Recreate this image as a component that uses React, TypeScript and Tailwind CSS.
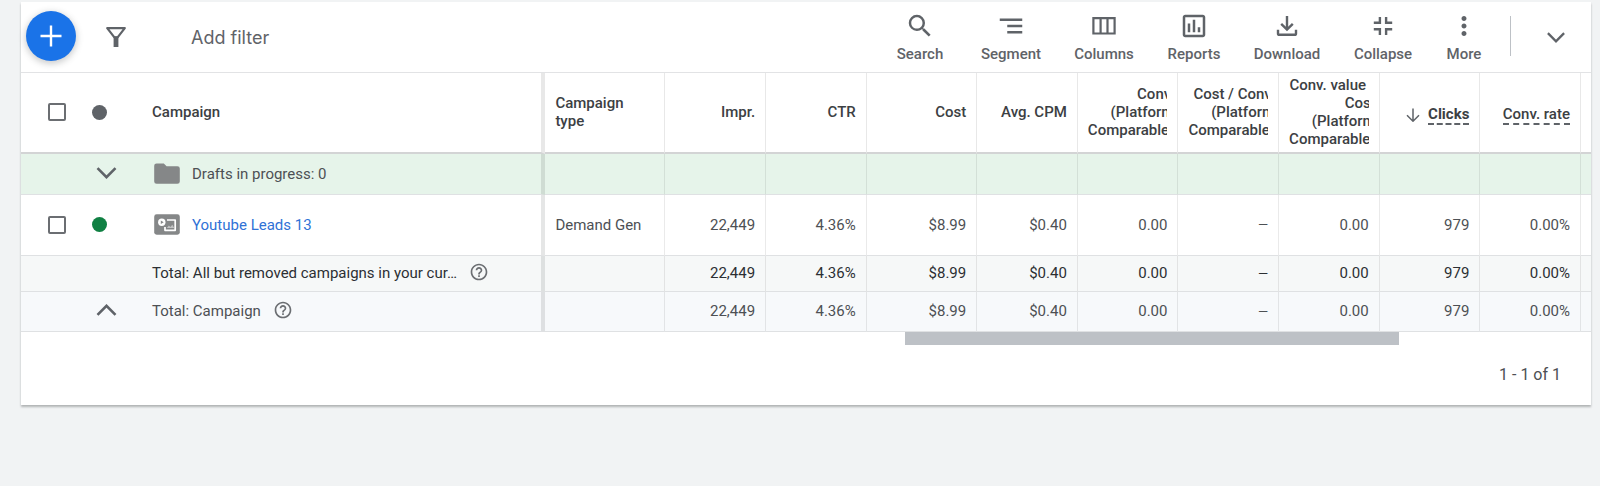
import type { ReactNode } from 'react';
import { MdHelpOutline, MdMoreVert, MdOutlineAssessment, MdSearch, MdSegment } from 'react-icons/md';

const glyph = 'size-[30px]';

function FilterIcon() {
  return (
    <svg viewBox="0 0 24 24" className="size-6" fill="none" stroke="currentColor" aria-hidden="true">
      <path d="M3.2 3.1h17.6L13.6 12.4h-3.2z" strokeWidth="2.2" strokeLinejoin="round" />
      <path d="M9.600 11.500h4.800V22H9.600z" fill="currentColor" stroke="none" />
    </svg>
  );
}

function ColumnsIcon() {
  return (
    <svg viewBox="0 0 30 30" className={glyph} fill="none" stroke="currentColor" strokeWidth="2.2" aria-hidden="true">
      <path d="M4.4 7.1h21.2v15.4H4.4zM11.6 7v15.5M18.5 7v15.5" />
    </svg>
  );
}

function DownloadIcon() {
  return (
    <svg viewBox="0 0 30 30" className={glyph} fill="none" stroke="currentColor" strokeWidth="2.4" aria-hidden="true">
      <path d="M15 5v13.2M9.2 12.8l5.8 5.8 5.8-5.8" />
      <path d="M6 18.8v3.6c0 .9.6 1.4 1.4 1.4h15.2c.8 0 1.4-.5 1.4-1.4v-3.6" />
    </svg>
  );
}

function CollapseIcon() {
  return (
    <svg viewBox="0 0 30 30" className={glyph} fill="none" stroke="currentColor" strokeWidth="2.4" aria-hidden="true">
      <path d="M5.8 11.8h6.1V6.1M24.2 11.8h-6.1V6.1M5.8 18.3h6.1V24M24.2 18.3h-6.1V24" />
    </svg>
  );
}

function Chevron({ className, up = false }: { className: string; up?: boolean }) {
  return (
    <svg viewBox="0 0 20 12" className={className} fill="none" stroke="currentColor" strokeWidth="2.6" aria-hidden="true">
      <path d={up ? 'M1 10.8l9-9 9 9' : 'M1 1.2l9 9 9-9'} />
    </svg>
  );
}

function FolderIcon() {
  return (
    <svg viewBox="0 0 26 21" className="h-[21px] w-[26px] shrink-0 text-[#858788]" aria-hidden="true">
      <path fill="currentColor" d="M2.6 0.4h7.2l2.8 2.8h10.8A2.4 2.4 0 0 1 25.8 5.6v12.8a2.4 2.4 0 0 1-2.4 2.4H2.6A2.4 2.4 0 0 1 .2 18.4V2.8A2.4 2.4 0 0 1 2.6.4z" />
    </svg>
  );
}

function DemandGenIcon() {
  return (
    <svg viewBox="0 0 26 21" className="h-[21px] w-[26px] shrink-0" fill="none" aria-hidden="true">
      <rect x="0.2" y="0.3" width="25.6" height="20.4" rx="2.4" fill="#858788" />
      <circle cx="7.8" cy="8.2" r="3.7" fill="#fff" />
      <path d="M6.8 6.4v3.6l2.9-1.8z" fill="#858788" />
      <path d="M13 6h8.2v10.3H11V13" stroke="#fff" strokeWidth="1.7" strokeLinejoin="round" />
      <path d="M12.8 14l2.1-2.4 1.5 1.5 1.9-2.3 1.9 3.2z" fill="#fff" fillOpacity="0.5" />
    </svg>
  );
}

const tools: { label: string; width: string; icon: ReactNode }[] = [
  { label: 'Search', width: 'w-[88px]', icon: <MdSearch className={glyph} /> },
  { label: 'Segment', width: 'w-[94px]', icon: <MdSegment className={glyph} /> },
  { label: 'Columns', width: 'w-[92px]', icon: <ColumnsIcon /> },
  { label: 'Reports', width: 'w-[88px]', icon: <MdOutlineAssessment className={glyph} /> },
  { label: 'Download', width: 'w-[98px]', icon: <DownloadIcon /> },
  { label: 'Collapse', width: 'w-[94px]', icon: <CollapseIcon /> },
  { label: 'More', width: 'w-[68px]', icon: <MdMoreVert className={glyph} /> },
];

function Toolbar() {
  return (
    <div className="flex h-[71px] items-center border-b border-[#e2e3e5] pb-[2px] text-[#5f6368]">
      <button
        type="button"
        aria-label="Create campaign"
        className="ml-[5px] flex size-[50px] items-center justify-center rounded-full bg-[#1a73e8] text-white shadow-[0_2px_6px_1px_rgba(60,64,67,0.25)]"
      >
        <svg viewBox="0 0 22 22" className="size-[22px]" stroke="currentColor" strokeWidth="2.4" aria-hidden="true">
          <path d="M11 .5v21M.5 11h21" />
        </svg>
      </button>
      <button type="button" aria-label="Filter" className="mt-[2px] ml-7">
        <FilterIcon />
      </button>
      <input
        aria-label="Add filter"
        placeholder="Add filter"
        className="ml-[63px] min-w-0 flex-1 bg-transparent pt-[3px] font-['Inter',sans-serif] text-lg outline-none placeholder:text-[#5f6368]"
      />
      <div className="flex pt-[2px]">
        {tools.map((tool) => (
          <button key={tool.label} type="button" className={`${tool.width} flex flex-col items-center gap-[3px] text-[15px] leading-5 font-medium`}>
            {tool.icon}
            {tool.label}
          </button>
        ))}
      </div>
      <div className="ml-3 h-10 w-px bg-[#bdc1c6]" />
      <button type="button" aria-label="Hide toolbar" className="mt-[2px] mr-[26px] ml-9">
        <Chevron className="h-[11px] w-[18px]" />
      </button>
    </div>
  );
}

const cell = 'border-r border-b border-r-[#3c40431c] border-b-[#dfe1e3] pt-0 pb-px';
const head = 'border-r border-b-2 border-r-[#e8e8e8] border-b-[#d3d4d5] pt-0 pb-px font-medium leading-[18px]';
const inset = 'px-[10px]';
const pinned = 'border-r-4 border-r-[#3c404322] px-0 text-left';

function CheckBox({ label }: { label: string }) {
  return (
    <input
      type="checkbox"
      aria-label={label}
      className="ml-[27px] size-[18px] shrink-0 appearance-none rounded-[2px] border-2 border-[#6b6e72] bg-white"
    />
  );
}

function ClippedHead({ lines }: { lines: string[] }) {
  return (
    <th scope="col" className={`${head} ${inset}`}>
      <div className="overflow-hidden">
        <div className="w-max text-right">
          {lines.map((line) => (
            <div key={line}>{line}</div>
          ))}
        </div>
      </div>
    </th>
  );
}

function Help() {
  return (
    <button type="button" aria-label="Help" className="mb-[2px] text-[#6b6e72]">
      <MdHelpOutline className="size-5" />
    </button>
  );
}

const metrics = ['22,449', '4.36%', '$8.99', '$0.40', '0.00', '—', '0.00', '979', '0.00%'];

function MetricCells({ empty = false }: { empty?: boolean }) {
  return (
    <>
      {metrics.map((value, i) => (
        <td key={i} className={`${cell} ${inset} text-right`}>
          {empty ? null : value === '—' ? <span className="text-[13px]">—</span> : value}
        </td>
      ))}
      <td className="border-b border-[#dfe1e3] p-0" />
    </>
  );
}

function CampaignTable() {
  return (
    <table className="w-full min-w-[1200px] table-fixed border-separate border-spacing-0 text-[15px] leading-5 text-[#4d5054]">
      <colgroup>
        <col className="w-[33.4%]" />
        <col className="w-[7.65%]" />
        <col className="w-[6.41%]" />
        <col className="w-[6.41%]" />
        <col className="w-[7.04%]" />
        <col className="w-[6.41%]" />
        <col className="w-[6.41%]" />
        <col className="w-[6.41%]" />
        <col className="w-[6.41%]" />
        <col className="w-[6.41%]" />
        <col className="w-[6.41%]" />
        <col />
      </colgroup>
      <thead className="text-[#3c4043]">
        <tr className="h-[81px]">
          <th scope="col" className={`${head} ${pinned}`}>
            <div className="flex items-center">
              <CheckBox label="Select all campaigns" />
              <span className="ml-[26px] size-[15px] rounded-full bg-[#5f6368]" />
              <span className="ml-[45px]">Campaign</span>
            </div>
          </th>
          <th scope="col" className={`${head} ${inset} text-left`}>
            Campaign
            <br />
            type
          </th>
          <th scope="col" className={`${head} ${inset} text-right`}>Impr.</th>
          <th scope="col" className={`${head} ${inset} text-right`}>CTR</th>
          <th scope="col" className={`${head} ${inset} text-right`}>Cost</th>
          <th scope="col" className={`${head} ${inset} text-right`}>Avg. CPM</th>
          <ClippedHead lines={['Conv.', '(Platform', 'Comparable)']} />
          <ClippedHead lines={['Cost / Conv.', '(Platform', 'Comparable)']} />
          <ClippedHead lines={['Conv. value /', 'Cost', '(Platform', 'Comparable)']} />
          <th scope="col" aria-sort="descending" className={`${head} ${inset}`}>
            <div className="flex items-center justify-end gap-2 pt-[5px]">
              <svg viewBox="0 0 14 14" className="size-[14px] text-[#5f6368]" fill="none" stroke="currentColor" strokeWidth="1.5" aria-hidden="true">
                <path d="M7 .5v12.5M1 7.2l6 6 6-6" />
              </svg>
              <span className="border-b-2 border-dashed border-[#5f6368] font-bold">Clicks</span>
            </div>
          </th>
          <th scope="col" className={`${head} ${inset} text-right`}>
            <div className="flex justify-end pt-[5px]">
              <span className="border-b-2 border-dashed border-[#5f6368] whitespace-nowrap">Conv. rate</span>
            </div>
          </th>
          <th className="border-b-2 border-[#d3d4d5] p-0" />
        </tr>
      </thead>
      <tbody>
        <tr className="h-[41px] bg-[#e6f4ea]">
          <td className={`${cell} ${pinned}`}>
            <div className="flex items-center">
              <button type="button" aria-label="Expand drafts" className="mb-[2px] ml-[75px] text-[#5f6368]">
                <Chevron className="h-3 w-[21px]" />
              </button>
              <span className="ml-[37px]"><FolderIcon /></span>
              <span className="ml-3">Drafts in progress: 0</span>
            </div>
          </td>
          <td className={cell} />
          <MetricCells empty />
        </tr>
        <tr className="h-[61px]">
          <td className={`${cell} ${pinned}`}>
            <div className="flex items-center">
              <CheckBox label="Select Youtube Leads 13" />
              <span className="ml-[26px] size-[15px] rounded-full bg-[#108043]" />
              <span className="ml-[47px]"><DemandGenIcon /></span>
              <a href="#campaign" className="ml-3 text-[#3072d6]">Youtube Leads 13</a>
            </div>
          </td>
          <td className={`${cell} ${inset}`}>Demand Gen</td>
          <MetricCells />
        </tr>
        <tr className="h-9 bg-[#f6f8f8] text-[#2c2f33]">
          <td className={`${cell} ${pinned}`}>
            <div className="ml-[131px] flex items-center gap-3">
              <span>Total: All but removed campaigns in your cur…</span>
              <Help />
            </div>
          </td>
          <td className={cell} />
          <MetricCells />
        </tr>
        <tr className="h-10 bg-[#f7f9fb]">
          <td className={`${cell} ${pinned}`}>
            <div className="flex items-center">
              <button type="button" aria-label="Collapse totals" className="mb-[2px] ml-[75px] text-[#5f6368]">
                <Chevron up className="h-3 w-[21px]" />
              </button>
              <span className="mr-3 ml-[35px]">Total: Campaign</span>
              <Help />
            </div>
          </td>
          <td className={cell} />
          <MetricCells />
        </tr>
      </tbody>
    </table>
  );
}

export default function App() {
  return (
    <div className="min-h-screen bg-[#f1f3f4] pt-[2px] pr-[9px] pl-[21px] font-['Roboto',sans-serif]">
      <main className="bg-white shadow-[0_2px_2px_rgba(60,64,67,0.35)]">
        <Toolbar />
        <div className="overflow-x-auto">
          <CampaignTable />
        </div>
        <div className="flex h-[13px]">
          <div className="w-[56.3%]" />
          <div className="w-[31.5%] bg-[#bdc1c6]" />
        </div>
        <div className="flex h-[60px] items-center justify-end pr-[30px] text-base text-[#4d5054]">1 - 1 of 1</div>
      </main>
    </div>
  );
}
